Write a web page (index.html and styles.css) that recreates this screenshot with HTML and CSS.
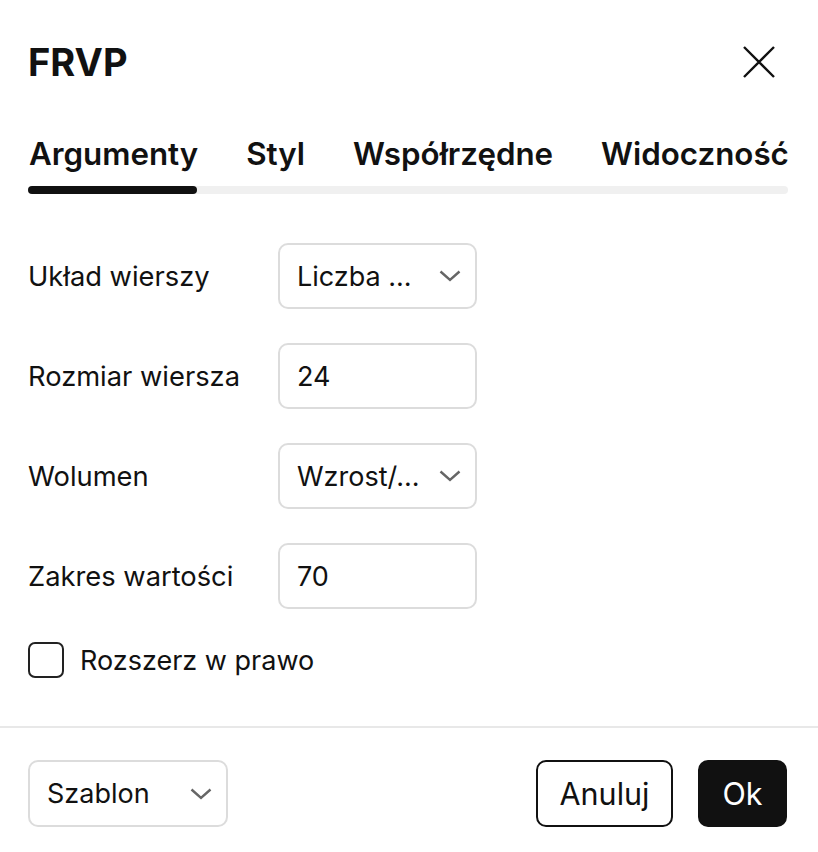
FILE: index.html
```html
<!DOCTYPE html>
<html lang="pl">
<head>
<meta charset="utf-8">
<title>FRVP</title>
<link rel="stylesheet" href="styles.css">
</head>
<body>
<div class="dialog">
  <div class="header">
    <h1 class="title">FRVP</h1>
    <button class="close" aria-label="Zamknij">
      <svg width="32" height="32" viewBox="0 0 32 32"><path d="M1 1 L31 31 M31 1 L1 31" stroke="#111" stroke-width="2.4" fill="none"/></svg>
    </button>
  </div>

  <div class="tabs">
    <div class="tab-list">
      <span class="tab active">Argumenty</span>
      <span class="tab">Styl</span>
      <span class="tab">Współrzędne</span>
      <span class="tab">Widoczność</span>
    </div>
    <div class="track"><div class="indicator"></div></div>
  </div>

  <div class="form">
    <div class="row">
      <span class="label">Układ wierszy</span>
      <div class="field select"><span>Liczba ...</span>
        <svg class="chev" width="22" height="12" viewBox="0 0 22 12"><path d="M1.5 1.5 L11 10 L20.5 1.5" stroke="#666" stroke-width="2.4" fill="none"/></svg>
      </div>
    </div>
    <div class="row">
      <span class="label">Rozmiar wiersza</span>
      <div class="field"><span>24</span></div>
    </div>
    <div class="row">
      <span class="label">Wolumen</span>
      <div class="field select"><span>Wzrost/...</span>
        <svg class="chev" width="22" height="12" viewBox="0 0 22 12"><path d="M1.5 1.5 L11 10 L20.5 1.5" stroke="#666" stroke-width="2.4" fill="none"/></svg>
      </div>
    </div>
    <div class="row">
      <span class="label">Zakres wartości</span>
      <div class="field"><span>70</span></div>
    </div>
    <label class="check-row">
      <span class="checkbox"></span>
      <span class="check-label">Rozszerz w prawo</span>
    </label>
  </div>

  <div class="divider"></div>

  <div class="footer">
    <div class="field select template"><span>Szablon</span>
      <svg class="chev" width="22" height="12" viewBox="0 0 22 12"><path d="M1.5 1.5 L11 10 L20.5 1.5" stroke="#666" stroke-width="2.4" fill="none"/></svg>
    </div>
    <div class="actions">
      <button class="btn btn-outline">Anuluj</button>
      <button class="btn btn-primary">Ok</button>
    </div>
  </div>
</div>
</body>
</html>
```

FILE: styles.css
```css
* { box-sizing: border-box; }
html, body { margin: 0; padding: 0; background: #fff; }
body {
  font-family: Inter, "Noto Sans", "Liberation Sans", sans-serif;
  color: #111;
  width: 818px;
  height: 852px;
  overflow: hidden;
}
.dialog { display: flex; flex-direction: column; }

.header {
  display: flex;
  align-items: center;
  justify-content: space-between;
  height: 62px;
  margin-top: 31px;
  padding: 0 43px 0 28px;
}
.title {
  margin: 0;
  font-size: 38px;
  font-weight: 700;
  letter-spacing: 0;
}
.close {
  border: 0;
  background: none;
  padding: 0;
  width: 32px;
  height: 32px;
  display: flex;
}

.tabs {
  margin: 37px 30px 0 28px;
  overflow: hidden;
}
.tab-list {
  display: flex;
  gap: 48px;
  white-space: nowrap;
  height: 48px;
  align-items: center;
  padding-left: 1px;
}
.tab {
  font-size: 31.3px;
  font-weight: 600;
  flex: none;
}
.track {
  margin-top: 8px;
  height: 8px;
  border-radius: 4px;
  background: #f0f0f0;
}
.indicator {
  width: 169px;
  height: 8px;
  border-radius: 4px;
  background: #111;
}

.form {
  margin: 49px 0 0 29px;
  display: flex;
  flex-direction: column;
  gap: 34px;
}
.row {
  display: grid;
  grid-template-columns: 249px 199px;
  align-items: center;
  height: 66px;
}
.label { font-size: 27.3px; margin-left: -1px; }
.field {
  height: 66px;
  border: 2px solid #dcdcdc;
  border-radius: 10px;
  display: flex;
  align-items: center;
  justify-content: space-between;
  padding: 0 14px 0 17px;
  font-size: 27px;
}
.chev { flex: none; }

.check-row {
  display: flex;
  align-items: center;
  gap: 16px;
  margin-top: -1px;
}
.checkbox {
  width: 36px;
  height: 36px;
  border: 2.5px solid #222;
  border-radius: 7px;
  margin-left: -1px;
}
.check-label { font-size: 27px; }

.divider {
  margin-top: 48px;
  height: 2px;
  background: #e8e8e8;
}

.footer {
  margin-top: 32px;
  display: flex;
  justify-content: space-between;
  align-items: center;
  padding: 0 31px 0 28px;
}
.template { width: 200px; height: 67px; }
.actions { display: flex; gap: 25px; }
.btn {
  font-family: inherit;
  font-size: 30.5px;
  height: 67px;
  border-radius: 10px;
  padding: 0;
}
.btn-outline {
  width: 137px;
  background: #fff;
  border: 2px solid #111;
  color: #111;
}
.btn-primary {
  width: 89px;
  background: #111;
  border: 2px solid #111;
  color: #fff;
}
```
